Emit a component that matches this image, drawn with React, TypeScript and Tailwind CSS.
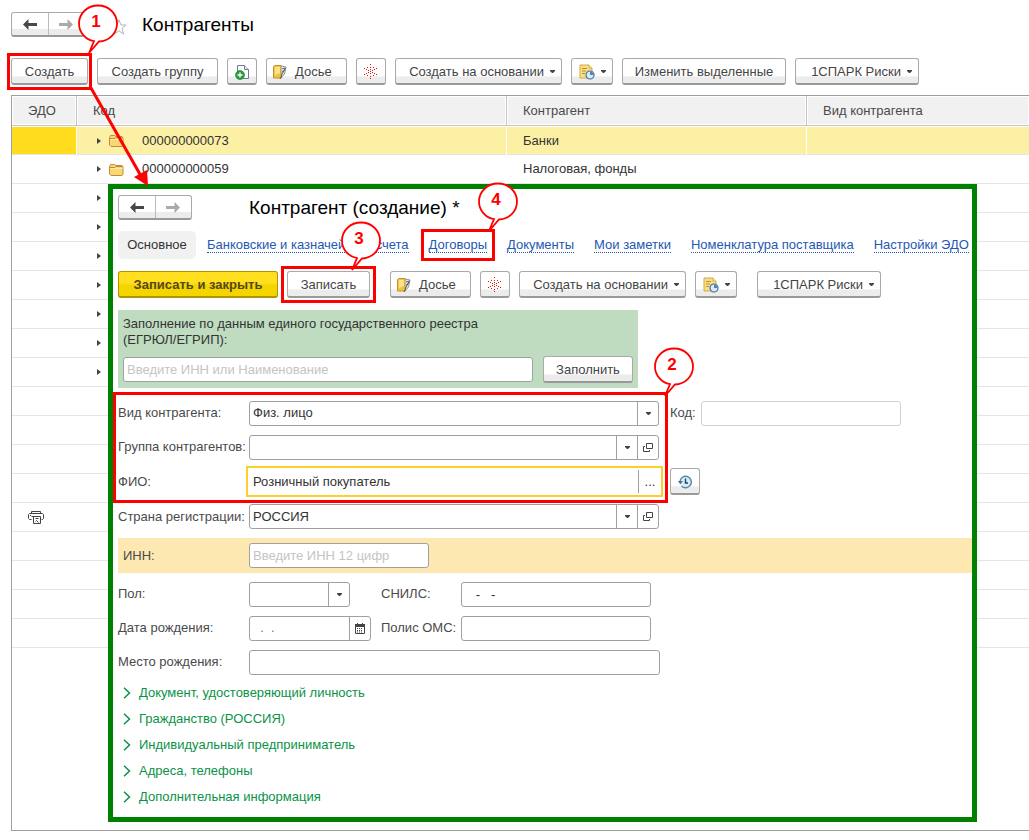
import type { ReactNode } from "react";

const rows = [
  { code: "000000000073", name: "Банки" },
  { code: "000000000059", name: "Налоговая, фонды" },
  ...Array.from({ length: 16 }, () => ({ code: "", name: "" })),
];

const links = ["Документы", "Мои заметки", "Номенклатура поставщика", "Настройки ЭДО"];

const groups = [
  "Документ, удостоверяющий личность",
  "Гражданство (РОССИЯ)",
  "Индивидуальный предприниматель",
  "Адреса, телефоны",
  "Дополнительная информация",
];

const linkClass = "border-b border-dotted border-[#2458b3] leading-[14px] whitespace-nowrap text-[#2458b3]";
const box = "h-[25px] rounded-[3px] border border-[#a0a0a0] bg-white text-[#333]";
const cellButton = "flex h-full w-[21px] shrink-0 items-center justify-center border-l border-[#a0a0a0]";

/* ---------- icons ---------- */

function Caret() {
  return (
    <svg width="5" height="3" viewBox="0 0 5 3" className="shrink-0" aria-hidden="true">
      <path d="M0 0h5v1L3 3H2L0 1z" fill="#444" />
    </svg>
  );
}

function Arrow({ forward = false }: { forward?: boolean }) {
  return (
    <svg width="14" height="11" viewBox="0 0 14 11" aria-hidden="true">
      {forward ? (
        <path d="M14 5.500 8.500 0v4H0v3h8.500v4z" fill="#aaa" />
      ) : (
        <path d="M0 5.500 5.500 0v4H14v3H5.500v4z" fill="#484848" />
      )}
    </svg>
  );
}

function Folder() {
  return (
    <svg width="15" height="13" viewBox="0 0 15 13" aria-hidden="true">
      <path d="M.5 11V3.500l1-2h4l1.500 1h6l1 1.500v7l-1 1.500h-11z" fill="#f9d871" stroke="#c48a3c" />
      <path d="M1 4.500h5l1-1h7" fill="none" stroke="#c48a3c" />
      <path d="M1.500 5.500h12" stroke="#fdeeb0" />
    </svg>
  );
}

function DocPlus() {
  return (
    <svg width="14" height="16" viewBox="0 0 14 16" aria-hidden="true">
      <path d="M2.500 1.500h7l4 4v9h-11z" fill="#fff" stroke="#6d7f92" />
      <path d="M9.500 1.500v4h4" fill="#e4ebf2" stroke="#6d7f92" />
      <circle cx="5" cy="11" r="4.500" fill="#2b9c3c" stroke="#1d7c2d" strokeWidth=".6" />
      <path d="M5 8.500v5M2.500 11h5" stroke="#fff" strokeWidth="1.400" />
    </svg>
  );
}

function Dossier() {
  return (
    <svg width="14" height="16" viewBox="0 0 14 16" aria-hidden="true">
      <path d="M6 1.500 13 3l-1.500 7L8 14H6z" fill="#dfe6ee" stroke="#8795a5" />
      <path d="M9 5l3-1M9 8l3-2" stroke="#5f7084" />
      <path d="M.5 2.500 2 1.500h6v11l-1 1.500H.5z" fill="#f0c440" stroke="#c6932b" />
      <path d="M2 3h5v6L2 11z" fill="#fbe491" />
      <path d="M7.500 15 9 10l3.500-6" fill="none" stroke="#6b5a45" />
    </svg>
  );
}

function Spark() {
  const dots = [
    [7, 0], [7, 3], [7, 5], [7, 7], [7, 9], [7, 12], [7, 14],
    [1, 4], [3, 5], [5, 6], [9, 8], [11, 9], [13, 10],
    [13, 4], [11, 5], [9, 6], [5, 8], [3, 9], [1, 10], [4, 3], [10, 3], [4, 11], [10, 11],
  ];
  return (
    <svg width="16" height="16" viewBox="0 0 16 16" shapeRendering="crispEdges" aria-hidden="true">
      {dots.map(([x, y]) => (
        <rect key={`${x}-${y}`} x={x} y={y} width="1" height="1" fill="#e8130c" />
      ))}
    </svg>
  );
}

function NoteClock() {
  return (
    <svg width="16" height="16" viewBox="0 0 16 16" aria-hidden="true">
      <path d="M1 1h9l3 3v10H1z" fill="#f8df83" stroke="#d3aa48" />
      <path d="M10 1v3h3" fill="#fff6cf" stroke="#d3aa48" />
      <path d="M3 4.500h5M3 7h4M3 9.500h3" stroke="#b79243" />
      <circle cx="11" cy="11" r="4" fill="#d7ebf8" stroke="#47719c" strokeWidth="1.200" />
      <path d="M11 11V7.500a3.500 3.500 0 0 1 3.500 3.500z" fill="#4d86bd" />
    </svg>
  );
}

function History() {
  return (
    <svg width="14" height="14" viewBox="0 0 14 14" aria-hidden="true">
      <circle cx="7.500" cy="7" r="5" fill="#d4edf8" />
      <path d="M1.900 7a5.700 5.700 0 1 1 1.600 4" fill="none" stroke="#5b88aa" strokeWidth="1.500" />
      <path d="M0 6h5L2.300 9.500z" fill="#4a7798" />
      <path d="M7.500 3.500V8H10" fill="none" stroke="#263f57" strokeWidth="1.400" />
    </svg>
  );
}

function OpenIcon() {
  return (
    <svg width="10" height="9" viewBox="0 0 10 9" aria-hidden="true">
      <path d="M3.500.5h6v5h-6zM2 3.500H.5v5h6V7" fill="none" stroke="#444" />
    </svg>
  );
}

function CalendarIcon() {
  return (
    <svg width="10" height="11" viewBox="0 0 10 11" aria-hidden="true">
      <path d="M.5 1.500h9v9h-9z" fill="#fff" stroke="#444" />
      <path d="M0 1h10v3H0zM2 0h1v1H2zM7 0h1v1H7z" fill="#444" />
      <path d="M2 5.500h6M2 7.500h6M2 9h6" stroke="#444" strokeDasharray="1 1" />
    </svg>
  );
}

function EdoIcon() {
  return (
    <svg width="16" height="15" viewBox="0 0 16 15" fill="none" stroke="#444" aria-hidden="true">
      <path d="M3.500 3.500v-2h9v2M3.500 9.500h-2l-1-1v-4l1-1h13l1 1v4l-1 1h-1" />
      <path d="M3.500 6.500h9M5.500 6.500v7h7v-7M7.500 8.500h3M7.500 11.500l1-1 2 2M2 5.500h1" />
    </svg>
  );
}

/* ---------- controls ---------- */

function Button({ children, label, className = "justify-center" }: { children: ReactNode; label?: string; className?: string }) {
  return (
    <button
      type="button"
      aria-label={label}
      className={`flex h-[27px] shrink-0 items-center rounded-[3px] border border-b-2 border-[#aaa] border-b-[#999] bg-linear-to-b from-white from-70% to-[#ececec] to-75% pt-px whitespace-nowrap text-[#444] ${className}`}
    >
      {children}
    </button>
  );
}

function NavButtons() {
  return (
    <div className="flex h-[25px] w-[74px] shrink-0 rounded-[3px] border border-b-2 border-[#aaa] border-b-[#999] bg-linear-to-b from-white from-70% to-[#ececec] to-75%">
      <button type="button" aria-label="Назад" className="flex flex-1 items-center justify-center border-r border-[#bbb]">
        <Arrow />
      </button>
      <button type="button" aria-label="Вперед" className="flex flex-1 items-center justify-center">
        <Arrow forward />
      </button>
    </div>
  );
}

function CommonButtons() {
  return (
    <>
      <Button className="w-[81px] gap-2 pl-1.5">
        <Dossier />
        Досье
      </Button>
      <Button label="1СПАРК" className="w-[30px] justify-center">
        <Spark />
      </Button>
      <Button className="w-[167px] justify-end gap-1.5 pr-1.5">
        Создать на основании
        <Caret />
      </Button>
      <Button label="Напоминания" className="w-[42px] justify-end gap-1.5 pr-1.5">
        <NoteClock />
        <Caret />
      </Button>
    </>
  );
}

function RisksButton({ className = "" }: { className?: string }) {
  return (
    <Button className={`w-[124px] justify-end gap-1.5 pr-1.5 ${className}`}>
      1СПАРК Риски
      <Caret />
    </Button>
  );
}

function Select({ id, value, className }: { id: string; value: string; className: string }) {
  return (
    <div className={`relative ${className}`}>
      <select id={id} defaultValue={value} className={`w-full appearance-none px-[3px] ${box}`}>
        <option>{value}</option>
      </select>
      <span className="pointer-events-none absolute inset-y-0 right-px">
        <span className={cellButton}>
          <Caret />
        </span>
      </span>
    </div>
  );
}

function Combo({ id, value = "" }: { id: string; value?: string }) {
  return (
    <div className={`flex w-[410px] ${box}`}>
      <input id={id} defaultValue={value} className="min-w-0 flex-1 px-[3px] outline-none" />
      <button type="button" aria-label="Выбрать" className={cellButton}>
        <Caret />
      </button>
      <button type="button" aria-label="Открыть" className={cellButton}>
        <OpenIcon />
      </button>
    </div>
  );
}

function Label({ id, children, className = "w-[131px]" }: { id: string; children: ReactNode; className?: string }) {
  return (
    <label htmlFor={id} className={`shrink-0 whitespace-nowrap ${className}`}>
      {children}
    </label>
  );
}

/* ---------- annotations ---------- */

function Callout({ n, className }: { n: number; className: string }) {
  return (
    <div className={`absolute h-[50px] w-[40px] ${className}`}>
      <svg width="40" height="50" viewBox="0 0 40 50" className="absolute inset-0" aria-hidden="true">
        <path
          d="M16 37.200C7.500 35.500 1 28.500 1 19.500 1 9.500 9.500 1.500 20 1.500s19 8 19 18-8 17.500-18 18L11 49z"
          fill="#fff"
          stroke="#f00"
          strokeWidth="1.800"
        />
      </svg>
      <span className="relative block pt-2 pr-1 text-center text-[17px] leading-5 font-bold text-[#f00]">{n}</span>
    </div>
  );
}

function Mark({ className, children }: { className: string; children: ReactNode }) {
  return <div className={`pointer-events-none absolute border-3 border-[#f00] ${className}`}>{children}</div>;
}

function Dialog() {
  return (
    <section
      aria-label="Контрагент (создание)"
      className="absolute top-[184px] right-[52px] left-[108px] border-5 border-[#008000] bg-white pt-1.5 pb-[7px] pl-[5px]"
    >
      <div className="flex h-[25px] items-center">
        <NavButtons />
        <h2 className="ml-[57px] pt-px text-[19px] text-black">Контрагент (создание) *</h2>
      </div>

      <nav className="mt-[11px] flex h-7 items-center">
        <a
          href="#main"
          className="mr-[11px] flex h-7 w-[78px] shrink-0 items-center justify-center rounded-[5px] bg-[#f1f1f1] text-[#333]"
        >
          Основное
        </a>
        <a href="#bank" className={`mr-5 ${linkClass}`}>
          Банковские и казначейские счета
        </a>
        <span className="relative mr-5">
          <a href="#contracts" className={linkClass}>
            Договоры
          </a>
          <Mark className="-inset-x-2 -inset-y-[6px]">
            <Callout n={4} className="-top-[50px] -right-[26px]" />
          </Mark>
        </span>
        {links.map((text) => (
          <a key={text} href="#section" className={`mr-5 last:mr-0 ${linkClass}`}>
            {text}
          </a>
        ))}
      </nav>

      <div className="mt-3 flex gap-[9px]">
        <button
          type="button"
          className="h-[27px] w-[160px] rounded-[3px] border border-b-2 border-[#b09400] bg-linear-to-b from-[#ffdf1e] from-45% to-[#f5d500] to-55% pt-px font-bold whitespace-nowrap text-[#54481a]"
        >
          Записать и закрыть
        </button>
        <div className="relative mr-[11px]">
          <Button className="w-[83px] justify-center">Записать</Button>
          <Mark className="-inset-x-[6px] -inset-y-[5px]">
            <Callout n={3} className="-top-[48px] -right-[8px]" />
          </Mark>
        </div>
        <CommonButtons />
        <RisksButton className="ml-[11px]" />
      </div>

      <div className="mt-3 h-[78px] w-[520px] bg-[#c0dcc0] px-[5px] pt-1.5">
        <label htmlFor="registry" className="block w-[400px] leading-4 text-[#333]">
          Заполнение по данным единого государственного реестра (ЕГРЮЛ/ЕГРИП):
        </label>
        <div className="mt-2 flex items-center gap-[10px]">
          <input id="registry" placeholder="Введите ИНН или Наименование" className={`w-[410px] px-[3px] placeholder:text-[#c4c4c4] ${box}`} />
          <Button className="w-[90px] justify-center">Заполнить</Button>
        </div>
      </div>

      <div className="relative mt-2">
        <div className="flex h-[34px] items-center">
          <Label id="kind">Вид контрагента:</Label>
          <Select id="kind" value="Физ. лицо" className="w-[410px]" />
          <Label id="code" className="ml-[11px] w-[31px]">
            Код:
          </Label>
          <input id="code" className="h-[25px] w-[200px] rounded-[3px] border border-[#d0d0d8] px-[3px]" />
        </div>
        <div className="flex h-[34px] items-center">
          <Label id="group">Группа контрагентов:</Label>
          <Combo id="group" />
        </div>
        <div className="flex h-[35px] items-center">
          <Label id="fio" className="w-[128px]">
            ФИО:
          </Label>
          <div className="flex h-[31px] w-[417px] border-2 border-[#fccf2b] py-0.5 text-[#333]">
            <input id="fio" defaultValue="Розничный покупатель" className="min-w-0 flex-1 px-[5px] outline-none" />
            <button type="button" aria-label="Изменить ФИО" className="w-[23px] border-l border-[#a0a0a0]">
              ...
            </button>
          </div>
          <Button label="История" className="ml-[7px] w-[30px] justify-center">
            <History />
          </Button>
        </div>
        <Mark className="-top-1 -bottom-1 -left-[5px] w-[555px]">
          <Callout n={2} className="-top-[48px] -right-[29px]" />
        </Mark>
      </div>

      <div className="flex h-[35px] items-center">
        <Label id="country">Страна регистрации:</Label>
        <Combo id="country" value="РОССИЯ" />
      </div>
      <div className="my-1 flex h-[35px] items-center bg-[#fde8b1] pl-[5px]">
        <Label id="inn" className="w-[126px]">
          ИНН:
        </Label>
        <input id="inn" placeholder="Введите ИНН 12 цифр" className={`w-[180px] px-[3px] placeholder:text-[#c4c4c4] ${box}`} />
      </div>

      <div className="grid auto-rows-[34px] grid-cols-[131px_132px_80px_190px] items-center">
        <Label id="sex">Пол:</Label>
        <Select id="sex" value="" className="w-[101px]" />
        <Label id="snils" className="w-20">
          СНИЛС:
        </Label>
        <input id="snils" defaultValue="   -   -" className={`w-full px-[3px] ${box}`} />
        <Label id="birth">Дата рождения:</Label>
        <div className={`flex w-[122px] ${box}`}>
          <input id="birth" defaultValue="  .  ." className="min-w-0 flex-1 px-[3px] text-[#b5622a] outline-none" />
          <button type="button" aria-label="Календарь" className={cellButton}>
            <CalendarIcon />
          </button>
        </div>
        <Label id="oms" className="w-20">
          Полис ОМС:
        </Label>
        <input id="oms" className={`w-full px-[3px] ${box}`} />
      </div>
      <div className="mb-px flex h-[34px] items-center">
        <Label id="place">Место рождения:</Label>
        <input id="place" className={`w-[411px] px-[3px] ${box}`} />
      </div>

      {groups.map((text) => (
        <button key={text} type="button" className="flex h-[26px] items-center gap-2 pl-[5px] text-[#0a9247]">
          <svg width="8" height="12" viewBox="0 0 8 12" aria-hidden="true">
            <path d="M1 .7 6.500 6 1 11.300" fill="none" stroke="#0a9247" strokeWidth="1.500" />
          </svg>
          {text}
        </button>
      ))}
    </section>
  );
}

export default function App() {
  return (
    <main className="relative flex min-h-screen flex-col overflow-hidden bg-white pt-3 pb-[9px] pl-[11px] font-['Liberation_Sans',Arial,sans-serif] text-[13px] text-[#4a4a4a]">
      <div className="flex h-[25px] items-center">
        <NavButtons />
        <svg width="16" height="16" viewBox="0 0 16 16" className="mt-1 ml-[26px]" aria-hidden="true">
          <path d="M8 .8 9.900 6h5.200L11 9.300l1.600 5.700L8 11.800 3.400 15 5 9.300.9 6h5.200z" fill="#fff" stroke="#b4b4b4" />
        </svg>
        <h1 className="ml-[15px] pt-0.5 text-[19px] text-black">Контрагенты</h1>
      </div>

      <div className="mt-[21px] flex gap-[9px]">
        <div className="relative">
          <Button className="w-[77px] justify-center">Создать</Button>
          <Mark className="-inset-x-1 -inset-y-[5px] z-10">
            <Callout n={1} className="-top-[52px] -right-[29px]" />
            {/* pointer from the button to the new form */}
            <svg width="64" height="104" viewBox="0 0 64 104" className="absolute top-[30px] left-[77px]" aria-hidden="true">
              <path d="M4 2 54 90" stroke="#f00" strokeWidth="3" />
              <path d="M61 100 47 91l13-7z" fill="#f00" />
            </svg>
          </Mark>
        </div>
        <Button className="w-[121px] justify-center">Создать группу</Button>
        <Button label="Создать копированием" className="w-[30px] justify-center">
          <DocPlus />
        </Button>
        <CommonButtons />
        <Button className="w-[164px] justify-center">Изменить выделенные</Button>
        <RisksButton />
      </div>

      <div className="mt-[10px] flex-1 border border-r-0 border-[#a0a0a0]">
        <table className="w-full table-fixed border-separate border-spacing-0 text-left">
          <colgroup>
            <col className="w-[65px]" />
            <col className="w-[430px]" />
            <col className="w-[300px]" />
            <col />
          </colgroup>
          <thead>
            <tr className="h-[30px]">
              {["ЭДО", "Код", "Контрагент", "Вид контрагента"].map((title) => (
                <th
                  key={title}
                  className="border-r border-b border-[#c4c4c4] bg-[#f1f1f1] px-4 font-normal shadow-[inset_0_0_0_1px_#fff] last:border-r-0"
                >
                  {title}
                </th>
              ))}
            </tr>
          </thead>
          <tbody className="text-[#333]">
            {rows.map((row, i) => (
              <tr key={i} className="group h-[29px]">
                <td className="border-b border-[#e5e5e5] px-4 group-first:border-t group-first:border-r group-first:border-t-white group-first:border-r-white group-first:bg-[#ffdc1e]">
                  {i === 13 && <EdoIcon />}
                </td>
                <td className="border-b border-[#e5e5e5] pl-5 group-first:border-t group-first:border-r group-first:border-t-white group-first:border-r-white group-first:bg-[#fcf0a5]">
                  {i < 9 && (
                    <div className="flex items-center">
                      <svg width="4" height="6" viewBox="0 0 4 6" aria-hidden="true">
                        <path d="M0 0 4 3 0 6z" fill="#444" />
                      </svg>
                      {row.code && (
                        <>
                          <span className="mr-[18px] ml-2">
                            <Folder />
                          </span>
                          {row.code}
                        </>
                      )}
                    </div>
                  )}
                </td>
                <td className="border-b border-[#e5e5e5] px-4 group-first:border-t group-first:border-r group-first:border-t-white group-first:border-r-white group-first:bg-[#fcf0a5]">
                  {row.name}
                </td>
                <td className="border-b border-[#e5e5e5] group-first:border-t group-first:border-t-white group-first:bg-[#fcf0a5]" />
              </tr>
            ))}
          </tbody>
        </table>
      </div>

      <Dialog />
    </main>
  );
}
